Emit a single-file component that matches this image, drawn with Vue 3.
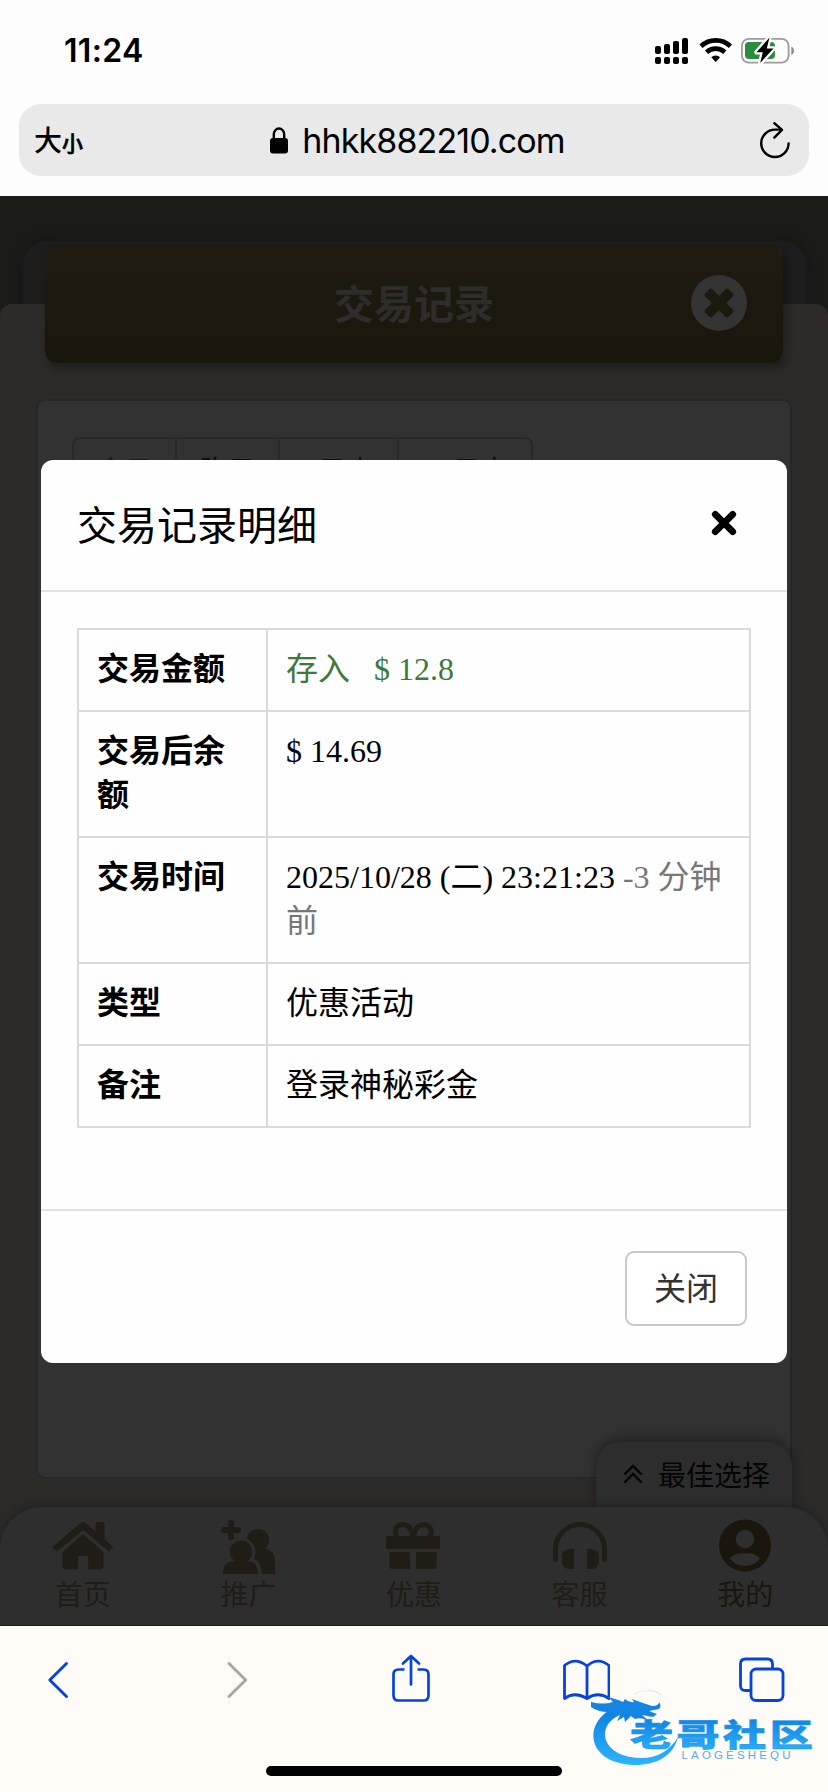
<script setup>
const rangeTabs = ['今日', '昨日', '7日内', '30日内']

const rows = [
  { label: '交易金额', value: '存入 \u00a0 $ 12.8', tone: 'income' },
  { label: '交易后余额', value: '$ 14.69' },
  { label: '交易时间', value: '2025/10/28 (二) 23:21:23 ', note: '-3 分钟前' },
  { label: '类型', value: '优惠活动' },
  { label: '备注', value: '登录神秘彩金' },
]

const navItems = [
  { id: 'home', label: '首页' },
  { id: 'invite', label: '推广' },
  { id: 'gift', label: '优惠' },
  { id: 'support', label: '客服' },
  { id: 'mine', label: '我的', active: true },
]
</script>

<template>
  <div class="phone">
    <header class="browser-top">
      <div class="status">
        <span class="clock">11:24</span>
        <svg class="status-icons" width="142" height="30" viewBox="0 0 142 30">
          <g fill="#000">
            <rect x="1" y="11" width="6" height="8" rx="2" />
            <rect x="10" y="9" width="6" height="10" rx="2" />
            <rect x="19" y="6" width="6" height="13" rx="2" />
            <rect x="28" y="3" width="6" height="16" rx="2" />
            <rect x="1" y="22" width="6" height="7" rx="2" />
            <rect x="10" y="22" width="6" height="7" rx="2" />
            <rect x="19" y="22" width="6" height="7" rx="2" />
            <rect x="28" y="22" width="6" height="7" rx="2" />
          </g>
          <g fill="none" stroke="#000" stroke-width="4.6">
            <path d="M47 11.2a21.500 21.500 0 0 1 29.400 0" />
            <path d="M52.600 17.200a13.500 13.500 0 0 1 18.200 0" />
          </g>
          <path d="M57.300 22.300a6.500 6.500 0 0 1 8.800 0l-4.400 4.700z" fill="#000" />
          <rect x="87.900" y="3.900" width="46.700" height="23.700" rx="7" fill="none" stroke="#9c9c9c" stroke-width="1.800" />
          <path d="M137.300 11.500c3.600 1.200 3.600 7.300 0 8.500z" fill="#8d8d8d" />
          <rect x="91" y="7" width="30" height="17" rx="4" fill="#2a8c3f" />
          <path d="M115.500 2.500 102.500 17.200h6.300l-2.600 10.900 13.300-14.700h-6.700z" fill="#000" stroke="#fff" stroke-width="4.500" paint-order="stroke" stroke-linejoin="round" />
        </svg>
      </div>
      <div class="address">
        <span class="text-size">大<small>小</small></span>
        <span class="host">
          <svg width="18" height="27" viewBox="0 0 18 27">
            <rect x="0" y="11" width="18" height="15.500" rx="3" />
            <path d="M3.800 12V7.400a5.200 5.900 0 0 1 10.400 0V12" fill="none" stroke="#000" stroke-width="2.400" />
          </svg>
          <span class="domain">hhkk882210.com</span>
        </span>
        <svg class="reload" width="32" height="38" viewBox="0 0 32 38">
          <g fill="none" stroke="#000" stroke-width="2.400" stroke-linecap="round" stroke-linejoin="round">
            <path d="M29.600 22.500A13.700 13.700 0 1 1 16 8.600h6.500" />
            <path d="m15.300 2.200 7.700 6.700-7.700 7.700" />
          </g>
        </svg>
      </div>
    </header>

    <main class="page">
      <div class="backplate"></div>
      <div class="sheet"></div>

      <div class="page-title">
        <h1>交易记录</h1>
        <svg class="round-close" width="56" height="56" viewBox="0 0 56 56">
          <circle cx="28" cy="28" r="28" fill="#343434" />
          <g fill="#1d190f" transform="rotate(45 28 28)">
            <rect x="11.500" y="23" width="33" height="10" rx="1.800" />
            <rect x="23" y="11.500" width="10" height="33" rx="1.800" />
          </g>
        </svg>
      </div>

      <section class="card">
        <div class="tabs">
          <span v-for="(tab, i) in rangeTabs" :key="tab" class="tab" :class="{ current: i === 0 }">{{ tab }}</span>
        </div>
      </section>

      <div class="best-pick">
        <svg width="20" height="20" viewBox="0 0 20 20">
          <path d="m1.500 10.500 8.500-8.500 8.500 8.500M1.500 18.500l8.500-8.500 8.500 8.500" fill="none" stroke="#050505" stroke-width="2.400" />
        </svg>
        <span>最佳选择</span>
      </div>

      <nav class="site-nav">
        <a v-for="item in navItems" :key="item.id" class="nav-item" :class="{ active: item.active }">
          <svg width="66" height="58" viewBox="0 0 66 58">
            <g v-if="item.id === 'home'" fill="currentColor">
              <path d="M2.500 29.200 29.800 5.300q3.200-2.600 6.400 0l9.300 8.100V6q0-2 2-2h5q2 0 2 2v15.600l8.900 7.600-4.500 4.300L33 12 7 33.500z" />
              <path d="M12.500 34 33 16l20.500 18v14.500q0 3-3 3H38.300V38H28v13.500H15.500q-3 0-3-3z" />
            </g>
            <g v-else-if="item.id === 'invite'" fill="currentColor">
              <path d="M16 5v14M9 12h14" stroke="currentColor" stroke-width="6" stroke-linecap="round" />
              <circle cx="43" cy="22" r="11" />
              <path d="M34 56V38q6-7 14-7.500Q60 31 60 44v12z" />
              <g stroke="#2e2e2e" stroke-width="7" paint-order="stroke">
                <circle cx="26" cy="34" r="11" />
                <path d="M8 56q0-13 12-13h12q11 0 11 13z" />
              </g>
              <circle cx="26" cy="34" r="11" />
              <path d="M3 56h59v4H3z" fill="#2e2e2e" />
            </g>
            <g v-else-if="item.id === 'gift'" fill="currentColor">
              <path d="M32.300 19C31 12 27.500 6.500 22 6.500c-7.500 0-9.500 7-6 12.500M32.300 19C33.500 12 37 6.500 42.500 6.500c7.500 0 9.500 7 6 12.500" fill="none" stroke="currentColor" stroke-width="5" />
              <rect x="5" y="18" width="54" height="13" rx="2" />
              <path d="M8.500 34.300H29V51H11.500q-3 0-3-3zM35 34.300h20.500V48q0 3-3 3H35z" />
            </g>
            <g v-else-if="item.id === 'support'" fill="currentColor">
              <path d="M8.500 41.500V31a24.500 24.500 0 0 1 49 0v10.500" fill="none" stroke="currentColor" stroke-width="5" stroke-linecap="round" />
              <path d="M27 31v20h-4q-8 0-8-8v-4q0-8 8-8zM40 31v20h4q8 0 8-8v-4q0-8-8-8z" />
            </g>
            <g v-else>
              <circle cx="33" cy="27.500" r="26" fill="currentColor" />
              <circle cx="33" cy="21" r="9.200" fill="#2e2e2e" />
              <path d="M18 40.500q5-6.200 15-5.200 10-1 15 5.200-5.500 7.500-15 7.500t-15-7.500z" fill="#2e2e2e" />
            </g>
          </svg>
          <span>{{ item.label }}</span>
        </a>
      </nav>

      <div class="dialog" role="dialog">
        <div class="dialog-head">
          <h2>交易记录明细</h2>
          <svg width="26" height="26" viewBox="0 0 26 26">
            <path d="m4.300 4.300 17.400 17.400M21.700 4.300 4.300 21.700" stroke="#000" stroke-width="6.800" stroke-linecap="round" />
          </svg>
        </div>
        <div class="dialog-body">
          <table>
            <tbody>
              <tr v-for="row in rows" :key="row.label">
                <th>{{ row.label }}</th>
                <td :class="row.tone">{{ row.value }}<span v-if="row.note" class="note">{{ row.note }}</span></td>
              </tr>
            </tbody>
          </table>
        </div>
        <div class="dialog-foot">
          <button type="button">关闭</button>
        </div>
      </div>
    </main>

    <footer class="browser-bottom">
      <div class="toolbar">
        <svg width="48" height="52" viewBox="0 0 48 52">
          <path d="M31.500 11.500 14.800 28l16.700 16.500" fill="none" stroke="#0542e0" stroke-width="2.900" stroke-linecap="round" stroke-linejoin="round" />
        </svg>
        <svg width="48" height="52" viewBox="0 0 48 52">
          <path d="M18 11.500 34.700 28 18 44.500" fill="none" stroke="#aaa6a3" stroke-width="2.900" stroke-linecap="round" stroke-linejoin="round" />
        </svg>
        <svg width="48" height="52" viewBox="0 0 48 52">
          <g fill="none" stroke="#0542e0" stroke-width="2.700" stroke-linecap="round" stroke-linejoin="round">
            <path d="M18.500 17.500H12.500q-5 0-5 5V43.500q0 5 5 5h25q5 0 5-5v-21q0-5-5-5h-6" stroke-linecap="butt" />
            <path d="M25 32.500V4M17 11.500l8-7.500 8 7.500" />
          </g>
        </svg>
        <svg width="48" height="52" viewBox="0 0 48 52">
          <path d="M25 14Q13.500 4.500 2.500 13.500v33q10.500-7.500 22.500 0 11-7.500 22 0v-33Q36 4.500 25 14zv32.500" fill="none" stroke="#0542e0" stroke-width="2.800" stroke-linejoin="round" />
        </svg>
        <svg width="48" height="52" viewBox="0 0 48 52">
          <g fill="none" stroke="#0542e0" stroke-width="2.800">
            <path d="M13.500 38.500H8.500q-5 0-5-5V12q0-5 5-5h22q5 0 5 5v5" />
            <rect x="14" y="17" width="32" height="31.500" rx="5" />
          </g>
        </svg>
      </div>
      <div class="home-indicator"></div>

      <svg class="community" width="228" height="84" viewBox="0 0 228 84">
        <defs>
          <linearGradient id="blue" x1="0" y1="0" x2="0" y2="1">
            <stop offset="0" stop-color="#0878dc" />
            <stop offset="1" stop-color="#2bb4fd" />
          </linearGradient>
        </defs>
        <path d="M39 15C-10 26-9 77 45 78c22 0 38-9 43-28-8 14-22 22-40 21C9 69 3 34 38 25z" fill="url(#blue)" />
        <path d="M1 15q12 3 22 0-2-3-6-5 10 2 16 5l2-3q4 4 9 3l-2-3 11 4 9 3q7 0 7-4 3 4 0 7l-10 2 8 3-4 3-11-2 6 5q-8-3-13-1l-4-3-6 6-1-5-7 4 3-6-9 1 5-5-8 1q-10 0-17-5z" fill="#1485e2" />
        <path d="M44 7q12-7 29 1M58 3q13 0 13 8" fill="none" stroke="#d3e4f1" stroke-width=".6" />
        <text class="community-name" transform="translate(40 58.500) scale(1.390 1)" x="0" y="0" fill="url(#blue)">老哥社区</text>
        <text class="community-latin" x="91.500" y="71.500" textLength="109" fill="#5aabe9">LAOGESHEQU</text>
      </svg>
    </footer>
  </div>
</template>

<style>
body {
  margin: 0;
}
</style>

<style scoped>
.phone {
  width: 828px;
  height: 1792px;
  display: flex;
  flex-direction: column;
  overflow: hidden;
  background: #fff;
  font-family: "Liberation Sans", "Noto Sans CJK SC", sans-serif;
}

.phone * {
  box-sizing: border-box;
}

svg {
  display: block;
  flex: none;
}

/* Browser chrome, top */
.browser-top {
  flex: none;
  height: 196px;
  background: #fdfdfd;
}

.status {
  height: 104px;
  padding: 0 32px 4px 64px;
  display: flex;
  align-items: center;
  justify-content: space-between;
}

.clock {
  padding-top: 2px;
  font: 600 32px/40px Inter, sans-serif;
  letter-spacing: 0.3px;
  color: #000;
}

.address {
  height: 72px;
  margin: 0 19px;
  padding: 0 18px 0 15px;
  border-radius: 22px;
  background: #e9e9e9;
  display: grid;
  grid-template-columns: 120px 1fr 120px;
  align-items: center;
}

.text-size {
  font: 500 28px/40px "Noto Sans CJK SC", sans-serif;
}

.text-size small {
  font-size: 21px;
  -webkit-text-stroke: 0.6px #000;
}

.host {
  padding-left: 10px;
  display: flex;
  align-items: center;
  justify-content: center;
  gap: 14px;
}

.domain {
  padding-top: 1px;
  font: 400 34px/40px Inter, sans-serif;
  letter-spacing: -0.9px;
}

.reload {
  justify-self: end;
}

/* Web page */
.page {
  position: relative;
  flex: none;
  height: 1430px;
  display: flex;
  flex-direction: column;
  background: #1b1b19;
}

.backplate {
  position: absolute;
  inset: 45px 22px auto 23px;
  height: 100px;
  border-radius: 24px 24px 0 0;
  background: #1d1d1e;
  box-shadow: 0 0 14px rgba(10, 10, 10, 0.3);
}

.sheet {
  position: absolute;
  inset: 108px 0 0;
  border-radius: 12px 12px 0 0;
  background: #2c2b29;
}

.page-title {
  position: relative;
  flex: none;
  height: 117px;
  margin: 50px 45px 0;
  border-radius: 12px;
  background: linear-gradient(#211b11, #19160c);
  box-shadow: 3px 5px 10px rgba(0, 0, 0, 0.35);
  display: grid;
  grid-template-columns: 100px 1fr 100px;
  align-items: center;
}

.page-title h1 {
  grid-column: 2;
  margin: 0 0 5px;
  text-align: center;
  font: 700 40px/50px "Noto Sans CJK SC", sans-serif;
  color: #2e2d2b;
}

.round-close {
  justify-self: end;
  margin: 0 36px 3px 0;
}

.card {
  position: relative;
  flex: none;
  height: 1080px;
  margin: 36px 36px 0;
  padding: 36px 34px;
  border: 2px solid #272727;
  border-radius: 9px;
  background: #323232;
}

.tabs {
  display: inline-flex;
  height: 60px;
  border: 2px solid #292929;
  border-radius: 8px;
}

.tab {
  padding: 13px 22.500px 0;
  font: 400 28px/40px "Liberation Sans", "Noto Sans CJK SC", sans-serif;
  color: #0c0c0c;
}

.tab + .tab {
  border-left: 2px solid #292929;
}

.tab.current {
  color: #311010;
}

.best-pick {
  position: absolute;
  left: 596px;
  top: 1246px;
  width: 196px;
  height: 66px;
  padding: 0 0 2px 27px;
  border-radius: 24px 24px 0 0;
  background: #2d2d2d;
  box-shadow: 0 -3px 12px rgba(0, 0, 0, 0.4);
  display: flex;
  align-items: center;
  gap: 15px;
  font: 400 28px/40px "Noto Sans CJK SC", sans-serif;
  color: #050505;
}

.site-nav {
  position: relative;
  flex: none;
  height: 119px;
  margin-top: 28px;
  padding-top: 11px;
  border-radius: 42px 42px 0 0;
  border-bottom: 1px solid #201f20;
  background: #2e2e2e;
  box-shadow: 0 -2px 10px rgba(0, 0, 0, 0.25);
  display: grid;
  grid-template-columns: repeat(5, 1fr);
}

.nav-item {
  display: flex;
  flex-direction: column;
  align-items: center;
  font: 400 28px/34px "Noto Sans CJK SC", sans-serif;
  color: #1f1d16;
}

.nav-item.active {
  color: #1a160d;
}

/* Dialog */
.dialog {
  position: absolute;
  left: 41px;
  top: 264px;
  width: 746px;
  height: 903px;
  border-radius: 12px;
  background: #fefefe;
  display: flex;
  flex-direction: column;
  color: #000;
}

.dialog-head {
  height: 132px;
  padding: 0 50px 0 36px;
  border-bottom: 2px solid #e3e3e3;
  display: flex;
  align-items: center;
  justify-content: space-between;
}

.dialog-head h2 {
  margin: 0 0 4px;
  font: 400 40px/56px "Noto Sans CJK SC", sans-serif;
}

.dialog-head svg {
  margin-bottom: 5px;
}

.dialog-body {
  height: 619px;
  padding: 36px 36px 0;
  border-bottom: 2px solid #e3e3e3;
}

table {
  width: 674px;
  table-layout: fixed;
  border-collapse: collapse;
}

th,
td {
  padding: 17px 18px 19px;
  border: 2px solid #dadada;
  text-align: left;
  vertical-align: top;
  font: 400 32px/44px "Liberation Serif", "Noto Sans CJK SC", serif;
}

th {
  width: 189px;
  font-weight: 700;
}

.income {
  color: #3b7a3b;
}

.note {
  color: #777;
}

.dialog-foot {
  flex: 1;
  padding: 2px 40px 0;
  display: flex;
  align-items: center;
  justify-content: flex-end;
}

.dialog-foot button {
  width: 122px;
  height: 75px;
  padding: 0 0 4px;
  border: 2px solid #c9c9c9;
  border-radius: 9px;
  background: #fff;
  font: 400 32px/44px "Noto Sans CJK SC", sans-serif;
  color: #333;
}

/* Browser chrome, bottom */
.browser-bottom {
  position: relative;
  flex: 1;
  background: #fffcf8;
}

.toolbar {
  height: 140px;
  padding: 26px 43px 0 35px;
  display: flex;
  justify-content: space-between;
}

.home-indicator {
  width: 296px;
  height: 10px;
  margin: 0 auto;
  border-radius: 5px;
  background: #000;
}

.community {
  position: absolute;
  left: 590px;
  top: 61px;
}

.community-name {
  font: 900 31px "Noto Sans CJK SC", sans-serif;
  letter-spacing: 2.500px;
  stroke: #1a95ec;
  stroke-width: 0.6px;
}

.community-latin {
  font: 400 11.500px "Liberation Sans", sans-serif;
}
</style>
